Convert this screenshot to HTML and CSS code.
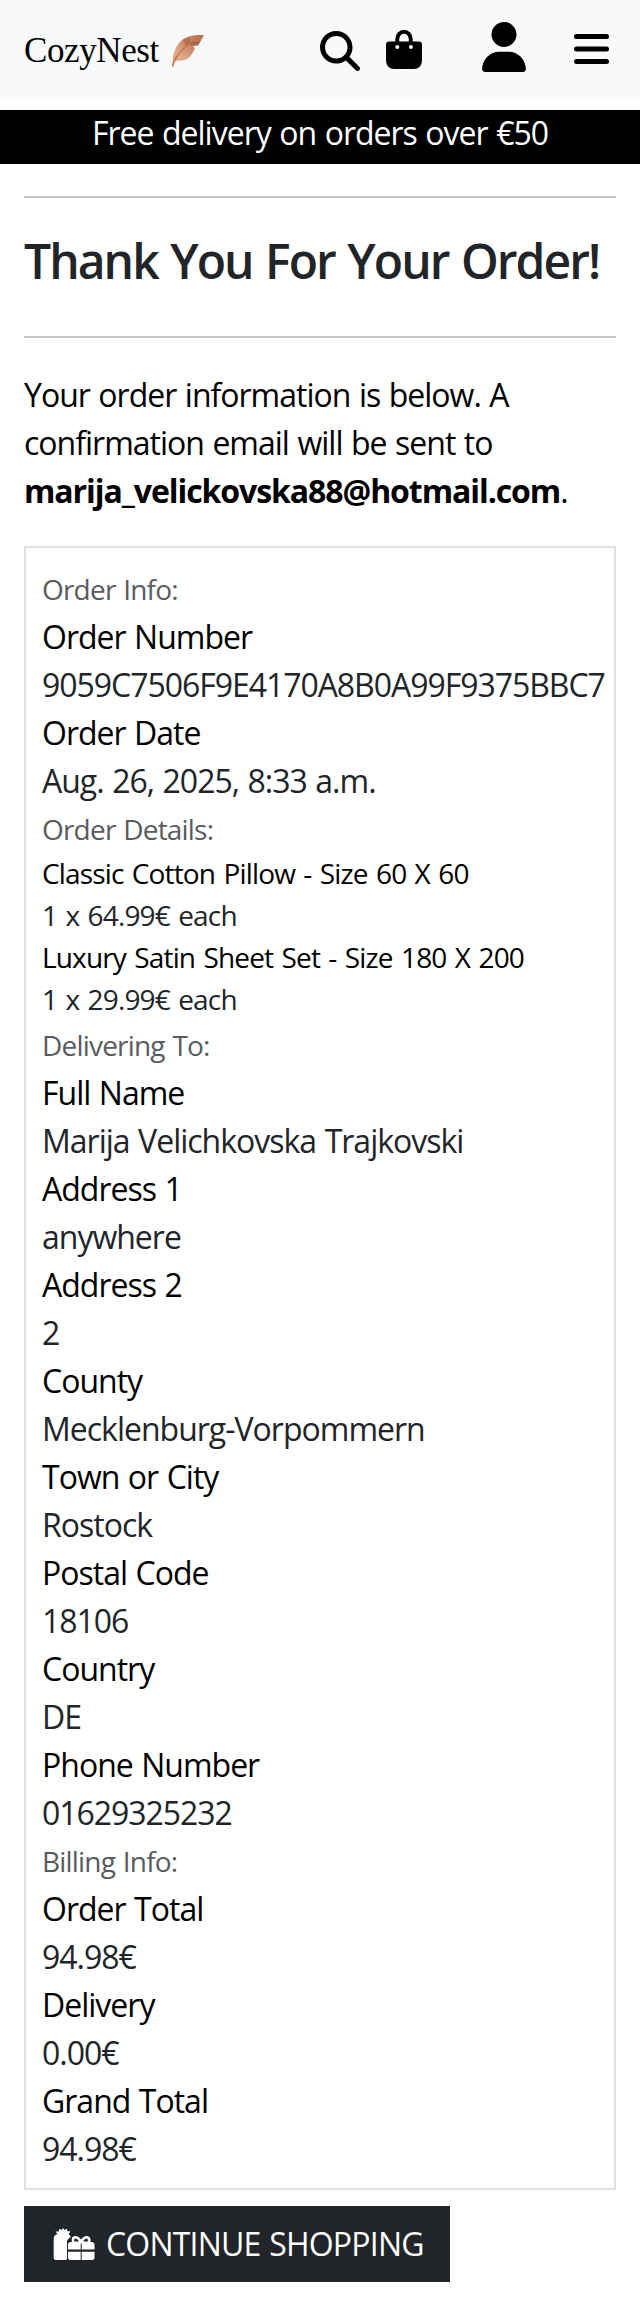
FILE: index.html
```html
<!DOCTYPE html>
<html lang="en">
<head>
<meta charset="utf-8">
<title>CozyNest</title>
<link rel="stylesheet" href="styles.css">
</head>
<body>
<header class="navbar">
  <a class="brand">CozyNest</a>
  <svg class="feather" width="34" height="34" viewBox="0 0 34 34">
    <defs>
      <linearGradient id="leaf" x1="1" y1="0" x2="0" y2="1">
        <stop offset="0" stop-color="#b97445"/>
        <stop offset=".4" stop-color="#c98a68"/>
        <stop offset=".75" stop-color="#e4ab8c"/>
        <stop offset="1" stop-color="#cf8a66"/>
      </linearGradient>
    </defs>
    <path d="M2 26C1.500 19 6 10 11.500 5.500C17 1.500 25 .5 33 1C31 5 29 8 27.500 11L22 12L24 14C22 19 19.500 22.500 17.500 24C15.500 26 12 26.500 7 26.500L4 27L2 32.500L1 32.500Z" fill="url(#leaf)"/>
    <path d="M12 6L18 3L20 9L15 12Z" fill="#a9604a" opacity=".6"/>
    <path d="M19 9L30 6L27 11.500L20 12Z" fill="#9b5748" opacity=".65"/>
    <path d="M1.500 32.500C4 22 12 12 31 2" fill="none" stroke="#c2713f" stroke-width="1.200"/>
  </svg>
  <svg class="search" width="40" height="40" viewBox="0 0 512 512"><path d="M416 208c0 45.900-14.900 88.300-40 122.700L502.600 457.400c12.500 12.500 12.500 32.800 0 45.300s-32.800 12.500-45.300 0L330.700 376c-34.400 25.200-76.800 40-122.700 40C93.100 416 0 322.900 0 208S93.100 0 208 0S416 93.100 416 208zM208 352a144 144 0 1 0 0-288 144 144 0 1 0 0 288z"/></svg>
  <svg class="bag" width="36" height="41" viewBox="0 0 36 41">
    <path d="M11.300 18V10a6.700 7.200 0 0 1 13.400 0V18" fill="none" stroke="#000" stroke-width="3.900"/>
    <path fill-rule="evenodd" d="M3.300 12.500H32.700Q36 12.500 36 15.800V32a8 8 0 0 1-8 8H8a8 8 0 0 1-8-8V15.800Q0 12.500 3.300 12.500Z"/>
    <circle cx="11.300" cy="18" r="2" fill="#f8f9fb"/>
    <circle cx="24.900" cy="18" r="2" fill="#f8f9fb"/>
  </svg>
  <svg class="user" width="44" height="50" viewBox="0 0 448 512"><path d="M224 256a128 128 0 1 0 0-256 128 128 0 1 0 0 256zm-45.700 48C79.800 304 0 383.800 0 482.300 0 498.700 13.300 512 29.700 512H418.300c16.400 0 29.700-13.300 29.700-29.700C448 383.800 368.200 304 269.700 304H178.300z"/></svg>
  <svg class="menu" width="35" height="40" viewBox="0 0 448 512"><rect y="64" width="448" height="64" rx="32"/><rect y="224" width="448" height="64" rx="32"/><rect y="384" width="448" height="64" rx="32"/></svg>
</header>
<div class="banner">Free delivery on orders over €50</div>
<main>
  <hr>
  <h1>Thank You For Your Order!</h1>
  <hr>
  <p class="intro">Your order information is below. A<br>confirmation email will be sent to<br><strong>marija_velickovska88@hotmail.com</strong>.</p>
  <section class="order">
    <h2>Order Info:</h2>
    <dl>
      <dt>Order Number</dt><dd class="code">9059C7506F9E4170A8B0A99F9375BBC7</dd>
      <dt>Order Date</dt><dd>Aug. 26, 2025, 8:33 a.m.</dd>
    </dl>
    <h2>Order Details:</h2>
    <dl class="items">
      <dt>Classic Cotton Pillow - Size 60 X 60</dt><dd>1 x 64.99€ each</dd>
      <dt>Luxury Satin Sheet Set - Size 180 X 200</dt><dd>1 x 29.99€ each</dd>
    </dl>
    <h2>Delivering To:</h2>
    <dl>
      <dt>Full Name</dt><dd>Marija Velichkovska Trajkovski</dd>
      <dt>Address 1</dt><dd>anywhere</dd>
      <dt>Address 2</dt><dd>2</dd>
      <dt>County</dt><dd>Mecklenburg-Vorpommern</dd>
      <dt>Town or City</dt><dd>Rostock</dd>
      <dt>Postal Code</dt><dd class="code">18106</dd>
      <dt>Country</dt><dd>DE</dd>
      <dt>Phone Number</dt><dd class="code">01629325232</dd>
    </dl>
    <h2>Billing Info:</h2>
    <dl>
      <dt>Order Total</dt><dd>94.98€</dd>
      <dt>Delivery</dt><dd>0.00€</dd>
      <dt>Grand Total</dt><dd>94.98€</dd>
    </dl>
  </section>
  <a class="button">
    <svg width="42" height="32" viewBox="0 0 42 32" fill="#fff">
      <path d="M2.500 32Q.7 32 .7 30V11Q.7 7 4.500 6L2.500 3.500L6 3.500L6 .8L8.500 2L10 0L11.500 2L14 .8L14.200 3L17.500 3.500L15.500 6L17.500 8V9.500Q14 11 14 14V30Q14 32 13 32Z"/>
      <path fill-rule="evenodd" d="M15 21.600V16.500Q15 14 18 14H19Q17.500 8 22.500 8Q25.500 8 28 11.500Q30.500 8 33.500 8Q38.500 8 37.500 14H38.500Q41.500 14 41.500 16.500V21.600H28.700V15.500H27.700V21.600ZM21.500 10.500L21 13.500H26Q24.500 10.500 21.500 10.500ZM34.500 10.500Q31.500 10.500 30.300 13.500H35Z"/>
      <path d="M15 23.800H27.700V32H17.500Q15 32 15 29.500ZM28.700 23.800H41.500V29.500Q41.500 32 39 32H28.700Z"/>
    </svg>
    <span>CONTINUE SHOPPING</span>
  </a>
</main>
</body>
</html>
```
FILE: styles.css
```css
* { box-sizing: border-box; }
body {
  margin: 0;
  background: #fff;
  color: #000;
  font: 32px/48px "Open Sans", "Noto Sans", sans-serif;
  letter-spacing: -1px;
  word-spacing: 1.2px;
}
.navbar {
  display: flex;
  align-items: flex-start;
  height: 100px;
  padding-left: 24px;
  background: #f8f9fb;
}
.navbar svg { flex: none; }
.brand {
  width: 147px;
  padding-top: 27px;
  font-family: "Liberation Serif", serif;
  font-size: 35px;
  letter-spacing: -0.4px;
}
.feather { margin-top: 34px; }
.search { margin: 31px 0 0 115px; }
.bag { margin: 29px 0 0 26px; }
.user { margin: 22px 0 0 60px; }
.menu { margin: 29px 0 0 48px; }
.banner {
  height: 54px;
  margin-top: 10px;
  background: #000;
  color: #fff;
  line-height: 46px;
  text-align: center;
}
main { padding: 32px 24px 16px; }
hr {
  height: 2px;
  margin: 0;
  border: 0;
  background: #c8c9ca;
}
h1 {
  margin: 0;
  padding: 34px 0 46px;
  color: #212529;
  font-size: 48px;
  font-weight: 600;
  line-height: 58px;
  letter-spacing: -1.95px;
  word-spacing: 2px;
  white-space: nowrap;
}
.intro { margin: 33px 0 31px; white-space: nowrap; }
.intro strong { letter-spacing: -1.07px; }
.order {
  padding: 17px 16px 15px;
  border: 2px solid #dee2e6;
  white-space: nowrap;
}
h2 {
  margin: 0;
  color: #595c5f;
  font-size: 28px;
  font-weight: 400;
  line-height: 48px;
  letter-spacing: -0.8px;
}
dl, dd { margin: 0; }
dd { color: #212529; }
.code { letter-spacing: -1.04px; }
.items {
  margin: -1px 0 1px;
  font-size: 28px;
  line-height: 42px;
  letter-spacing: -0.85px;
  word-spacing: 1.9px;
}
.button {
  display: flex;
  align-items: flex-start;
  gap: 11px;
  width: 426px;
  height: 76px;
  margin-top: 16px;
  padding: 14px 29px;
  background: #212529;
  color: #fff;
  letter-spacing: -0.8px;
  white-space: nowrap;
}
.button svg { flex: none; margin-top: 8px; }
```
